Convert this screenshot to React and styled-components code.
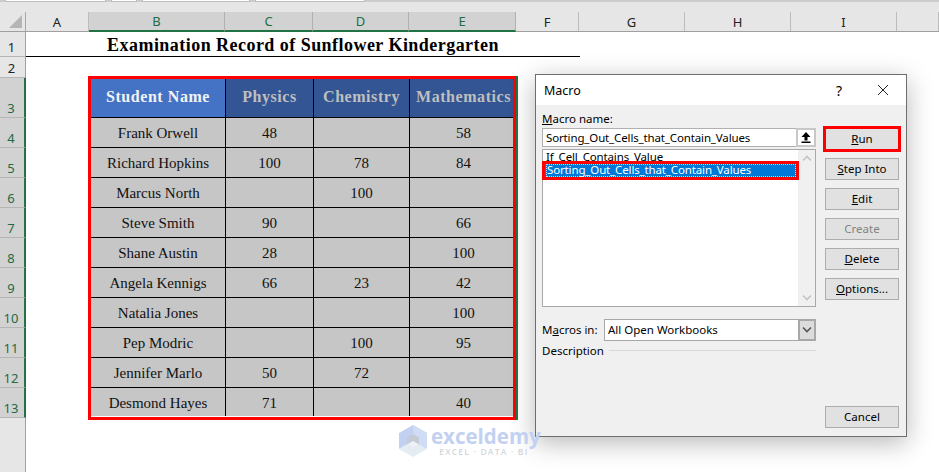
import React from "react";
import styled, { createGlobalStyle } from "styled-components";

const Global = createGlobalStyle`
  html, body { margin: 0; padding: 0; background: #fff; overflow: hidden; }
  #root { width: 939px; height: 472px; overflow: hidden; position: relative; }
  * { box-sizing: border-box; }
`;

const Page = styled.div`
  width: 939px;
  height: 472px;
  display: flex;
  flex-direction: column;
  position: relative;
  font-family: "Noto Sans", sans-serif;
`;

const TopStrip = styled.div`
  height: 12px;
  flex: none;
  background: #e6e6e6;
  display: flex;
  align-items: flex-start;
  gap: 5px;
  padding-left: 5px;
  box-shadow: inset 0 2px 0 #cccccc;
`;
const FormulaBox = styled.div`
  height: 2px;
  width: ${p => p.$w}px;
  background: #fff;
  border-bottom: 1px solid #bdbdbd;
  border-left: 1px solid #bdbdbd;
  border-right: 1px solid #bdbdbd;
`;

const HeaderRow = styled.div`
  display: flex;
  height: 20px;
  flex: none;
  background: #e6e6e6;
  border-bottom: 1px solid #a0a0a0;
`;
const Corner = styled.div`
  width: 26px;
  flex: none;
  border-right: 1px solid #a8a8a8;
  display: flex;
  align-items: center;
  justify-content: flex-end;
  padding-right: 3px;
`;
const ColHead = styled.div`
  width: ${p => p.$w}px;
  flex: none;
  height: ${p => (p.$sel ? "20px" : "19px")};
  display: flex;
  align-items: center;
  justify-content: center;
  font-size: 13px;
  color: ${p => (p.$sel ? "#1f6b44" : "#222")};
  background: ${p => (p.$sel ? "#d2d2d2" : "transparent")};
  border-right: 1px solid ${p => (p.$sel ? "#b0b0b0" : "#bcbcbc")};
  border-bottom: ${p => (p.$sel ? "2px solid #217346" : "0")};
`;

const SheetBody = styled.div`
  display: flex;
  flex: 1;
  min-height: 0;
`;
const Gutter = styled.div`
  width: 26px;
  flex: none;
  background: #e6e6e6;
  border-right: 1px solid #a0a0a0;
  display: flex;
  flex-direction: column;
`;
const RowNum = styled.div`
  height: ${p => p.$h}px;
  flex: none;
  width: ${p => (p.$sel ? "26px" : "25px")};
  display: flex;
  align-items: flex-end;
  justify-content: center;
  font-size: 13px;
  line-height: 17px;
  padding-right: 2px;
  color: ${p => (p.$sel ? "#1f6b44" : "#222")};
  background: ${p => (p.$sel ? "#d2d2d2" : "#e6e6e6")};
  border-bottom: 1px solid #b5b5b5;
  border-right: ${p => (p.$sel ? "2px solid #217346" : "0")};
`;

const Grid = styled.div`
  flex: 1;
  background: #fff;
  display: flex;
  flex-direction: column;
`;
const TitleRow = styled.div`
  width: 554px;
  height: 25px;
  flex: none;
  border-bottom: 1px solid #000;
  font-family: "Liberation Serif", serif;
  font-weight: 700;
  font-size: 18px;
  letter-spacing: 0.46px;
  line-height: 26px;
  color: #000;
  text-align: center;
`;
const BlankRow = styled.div`
  height: 19px;
  flex: none;
`;
const TableFrame = styled.div`
  margin-left: 62px;
  width: 428px;
  height: 344px;
  flex: none;
  border: 3px solid #ff0000;
  box-shadow: 2px 0 0 #217346;
  background: #fff;
`;
const Table = styled.div`
  display: grid;
  grid-template-columns: 135px 88px 96px 103px;
  grid-template-rows: 39px repeat(9, 30px) 28px;
  font-family: "Liberation Serif", serif;
`;
const HeadCell = styled.div`
  display: flex;
  align-items: center;
  justify-content: center;
  font-weight: 700;
  font-size: 16px;
  letter-spacing: 0.55px;
  white-space: nowrap;
  padding-bottom: 3px;
  padding-left: ${p => (p.$last ? "4px" : "0")};
  background: ${p => (p.$primary ? "#4472c4" : "#335593")};
  color: ${p => (p.$primary ? "#f2f2f2" : "#bfbfbf")};
  border-bottom: 1px solid #000;
  border-right: ${p => (p.$last ? "0" : "1px solid #000")};
`;
const Cell = styled.div`
  display: flex;
  align-items: center;
  justify-content: center;
  background: #c6c6c6;
  color: #111;
  font-size: 15px;
  padding-top: 2px;
  padding-left: ${p => (p.$last ? "4px" : "0")};
  white-space: nowrap;
  border-bottom: ${p => (p.$bottom ? "0" : "1px solid #000")};
  border-right: ${p => (p.$last ? "0" : "1px solid #000")};
`;

const Dialog = styled.div`
  position: absolute;
  left: 535px;
  top: 74px;
  width: 372px;
  height: 363px;
  background: #f0f0f0;
  border: 1px solid #6e6e6e;
  box-shadow: 0 6px 24px rgba(0, 0, 0, 0.28);
  display: flex;
  flex-direction: column;
  color: #000;
  font-size: 11.5px;
`;
const TitleBar = styled.div`
  height: 30px;
  flex: none;
  background: #fff;
  display: flex;
  align-items: center;
  padding-left: 8px;
  font-size: 12.5px;
`;
const TitleText = styled.span`
  flex: 1;
`;
const HelpMark = styled.span`
  font-size: 14px;
  width: 20px;
  margin-right: 28px;
  text-align: center;
`;
const CloseBtn = styled.span`
  width: 12px;
  height: 12px;
  display: block;
  margin-right: 17px;
  line-height: 0;
`;
const DialogBody = styled.div`
  flex: 1;
  display: grid;
  grid-template-columns: 274px 74px;
  column-gap: 9px;
  padding: 6px 7px 8px 6px;
  min-height: 0;
`;
const LeftCol = styled.div`
  display: flex;
  flex-direction: column;
`;
const RightCol = styled.div`
  display: flex;
  flex-direction: column;
  gap: 8px;
  padding-top: 17px;
`;
const FieldLabel = styled.div`
  height: 17px;
  line-height: 15px;
  white-space: nowrap;
`;
const NameInput = styled.div`
  height: 19px;
  flex: none;
  background: #fff;
  border: 1px solid #b0b0b0;
  display: flex;
  align-items: center;
  justify-content: space-between;
  padding-left: 3px;
  letter-spacing: -0.14px;
`;
const RefBtn = styled.div`
  width: 20px;
  height: 19px;
  border: 2px solid #c8c8c8;
  background: #fff;
  margin-right: -1px;
  display: flex;
  align-items: center;
  justify-content: center;
`;
const ListBox = styled.div`
  margin-top: 2px;
  height: 158px;
  flex: none;
  background: #fff;
  border: 1px solid #a8a8a8;
  display: flex;
  position: relative;
  letter-spacing: -0.14px;
`;
const ListItems = styled.div`
  flex: 1;
  position: relative;
`;
const ListItem = styled.div`
  height: 13px;
  line-height: 13px;
  padding-left: 3px;
  white-space: nowrap;
`;
const SelectedItem = styled.div`
  position: absolute;
  left: -1px;
  top: 11px;
  width: 257px;
  height: 19px;
  border: 3px solid #ff0000;
  background: #0078d7;
  color: #fff;
  white-space: nowrap;
  padding-left: 1px;
`;
const FocusDots = styled.div`
  height: 100%;
  border: 1px dotted rgba(255, 255, 255, 0.75);
  line-height: 10px;
`;
const ScrollBar = styled.div`
  width: 17px;
  flex: none;
  background: #f0f0f0;
  display: flex;
  flex-direction: column;
  justify-content: space-between;
  align-items: center;
  padding: 5px 0;
`;
const MacrosRow = styled.div`
  margin-top: 12px;
  display: flex;
  align-items: center;
  height: 22px;
  padding-bottom: 1px;
`;
const MacrosLabel = styled.div`
  width: 62px;
  flex: none;
`;
const SelectBox = styled.div`
  flex: 1;
  height: 22px;
  background: #fff;
  border: 1px solid #a8a8a8;
  display: flex;
  align-items: center;
  justify-content: space-between;
  padding: 0 0 1px 3px;
`;
const SelectBtn = styled.div`
  width: 18px;
  height: 22px;
  margin: -1px -1px -2px 0;
  border: 2px solid #a8a8a8;
  background: #dcdcdc;
  display: flex;
  align-items: center;
  justify-content: center;
`;
const DescRow = styled.div`
  margin-top: 1px;
  height: 17px;
  display: flex;
  align-items: center;
  gap: 5px;
`;
const DescLine = styled.div`
  flex: 1;
  height: 1px;
  background: #d9d9d9;
`;
const Btn = styled.div`
  width: 74px;
  height: 22px;
  flex: none;
  background: #e1e1e1;
  border: 1px solid ${p => (p.$accent ? "#0078d7" : "#adadad")};
  display: flex;
  align-items: center;
  justify-content: center;
  padding-bottom: 2px;
  color: ${p => (p.$disabled ? "#838383" : "#000")};
  margin-top: ${p => (p.$pushed ? "auto" : "0")};
  outline: ${p => (p.$accent ? "3px solid #ff0000" : "0")};
  outline-offset: -1px;
  white-space: nowrap;
`;

const Watermark = styled.div`
  position: absolute;
  left: 398px;
  top: 425px;
  display: flex;
  gap: 3px;
  pointer-events: none;
`;
const WmText = styled.div`
  display: flex;
  flex-direction: column;
  align-items: center;
`;
const WmName = styled.div`
  font-family: "Open Sans", sans-serif;
  font-weight: 700;
  font-size: 20.5px;
  line-height: 22px;
  color: #c2d1f2;
`;
const WmTag = styled.div`
  font-family: "Open Sans", sans-serif;
  font-weight: 600;
  font-size: 8.5px;
  line-height: 10px;
  letter-spacing: 1.2px;
  color: #d3d6db;
  margin-right: 4px;
`;

const cols = [
  ["A", 63, false], ["B", 136, true], ["C", 88, true], ["D", 96, true], ["E", 107, true],
  ["F", 63, false], ["G", 106, false], ["H", 106, false], ["I", 106, false], ["", 42, false],
];
const rowNums = [
  [1, 25, false], [2, 21, false], [3, 40, true],
  ...[4, 5, 6, 7, 8, 9, 10, 11, 12, 13].map(n => [n, 30, true]),
];
const heads = ["Student Name", "Physics", "Chemistry", "Mathematics"];
const data = [
  ["Frank Orwell", "48", "", "58"],
  ["Richard Hopkins", "100", "78", "84"],
  ["Marcus North", "", "100", ""],
  ["Steve Smith", "90", "", "66"],
  ["Shane Austin", "28", "", "100"],
  ["Angela Kennigs", "66", "23", "42"],
  ["Natalia Jones", "", "", "100"],
  ["Pep Modric", "", "100", "95"],
  ["Jennifer Marlo", "50", "72", ""],
  ["Desmond Hayes", "71", "", "40"],
];

const Chevron = ({ color = "#a0a0a0", up }) => (
  <svg width="10" height="7" viewBox="0 0 10 7">
    <path d={up ? "M1 5.5 5 1.5 9 5.5" : "M1 1.5 5 5.5 9 1.5"} fill="none" stroke={color} strokeWidth="1.6" />
  </svg>
);

export default function App() {
  return (
    <Page>
      <Global />
      <TopStrip>
        <FormulaBox $w={101} />
        <FormulaBox $w={26} />
        <FormulaBox $w={108} />
        <FormulaBox $w={110} />
      </TopStrip>
      <HeaderRow>
        <Corner>
          <svg width="13" height="13" viewBox="0 0 13 13"><path d="M13 0V13H0Z" fill="#b5b5b5" /></svg>
        </Corner>
        {cols.map(([l, w, s], i) => (
          <ColHead key={i} $w={w} $sel={s}>{l}</ColHead>
        ))}
      </HeaderRow>
      <SheetBody>
        <Gutter>
          {rowNums.map(([n, h, s]) => (
            <RowNum key={n} $h={h} $sel={s}>{n}</RowNum>
          ))}
        </Gutter>
        <Grid>
          <TitleRow>Examination Record of Sunflower Kindergarten</TitleRow>
          <BlankRow />
          <TableFrame>
            <Table>
              {heads.map((h, i) => (
                <HeadCell key={h} $primary={i === 0} $last={i === 3}>{h}</HeadCell>
              ))}
              {data.map((row, r) =>
                row.map((c, i) => (
                  <Cell key={r + "-" + i} $last={i === 3} $bottom={r === 9}>{c}</Cell>
                ))
              )}
            </Table>
          </TableFrame>
        </Grid>
      </SheetBody>

      <Dialog>
        <TitleBar>
          <TitleText>Macro</TitleText>
          <HelpMark>?</HelpMark>
          <CloseBtn>
            <svg width="12" height="12" viewBox="0 0 12 12">
              <path d="M1 1 11 11M11 1 1 11" stroke="#222" strokeWidth="1" fill="none" />
            </svg>
          </CloseBtn>
        </TitleBar>
        <DialogBody>
          <LeftCol>
            <FieldLabel><u>M</u>acro name:</FieldLabel>
            <NameInput>
              Sorting_Out_Cells_that_Contain_Values
              <RefBtn>
                <svg width="10" height="11" viewBox="0 0 10 11">
                  <path d="M5 0 9.5 5H6.5V8.5H3.5V5H.5ZM.5 9.5H9.5V11H.5Z" fill="#000" />
                </svg>
              </RefBtn>
            </NameInput>
            <ListBox>
              <ListItems>
                <ListItem>If_Cell_Contains_Value</ListItem>
                <SelectedItem><FocusDots>Sorting_Out_Cells_that_Contain_Values</FocusDots></SelectedItem>
              </ListItems>
              <ScrollBar>
                <Chevron up color="#c4c4c4" />
                <Chevron color="#c4c4c4" />
              </ScrollBar>
            </ListBox>
            <MacrosRow>
              <MacrosLabel>M<u>a</u>cros in:</MacrosLabel>
              <SelectBox>
                All Open Workbooks
                <SelectBtn><Chevron color="#555" /></SelectBtn>
              </SelectBox>
            </MacrosRow>
            <DescRow>
              Description
              <DescLine />
            </DescRow>
          </LeftCol>
          <RightCol>
            <Btn $accent><span><u>R</u>un</span></Btn>
            <Btn><span><u>S</u>tep Into</span></Btn>
            <Btn><span><u>E</u>dit</span></Btn>
            <Btn $disabled>Create</Btn>
            <Btn><span><u>D</u>elete</span></Btn>
            <Btn><span><u>O</u>ptions...</span></Btn>
            <Btn $pushed>Cancel</Btn>
          </RightCol>
        </DialogBody>
      </Dialog>

      <Watermark>
        <svg width="30" height="32" viewBox="0 0 30 32">
          <path d="M15 0 29 8V24L15 16 1 24V8Z" fill="#c2d1f2" />
          <path d="M15 0 29 8V24L15 16Z" fill="#d0dcf6" />
          <path d="M1 24 15 16 29 24 15 32Z" fill="#e4ecf4" />
          <path d="M15 9 21 12.500V19.500L15 23 9 19.500V12.500Z" fill="#c4cad6" />
          <path d="M15 16 21 19.500 15 23 9 19.500Z" fill="#eef2f8" />
        </svg>
        <WmText>
          <WmName>exceldemy</WmName>
          <WmTag>EXCEL · DATA · BI</WmTag>
        </WmText>
      </Watermark>
    </Page>
  );
}
